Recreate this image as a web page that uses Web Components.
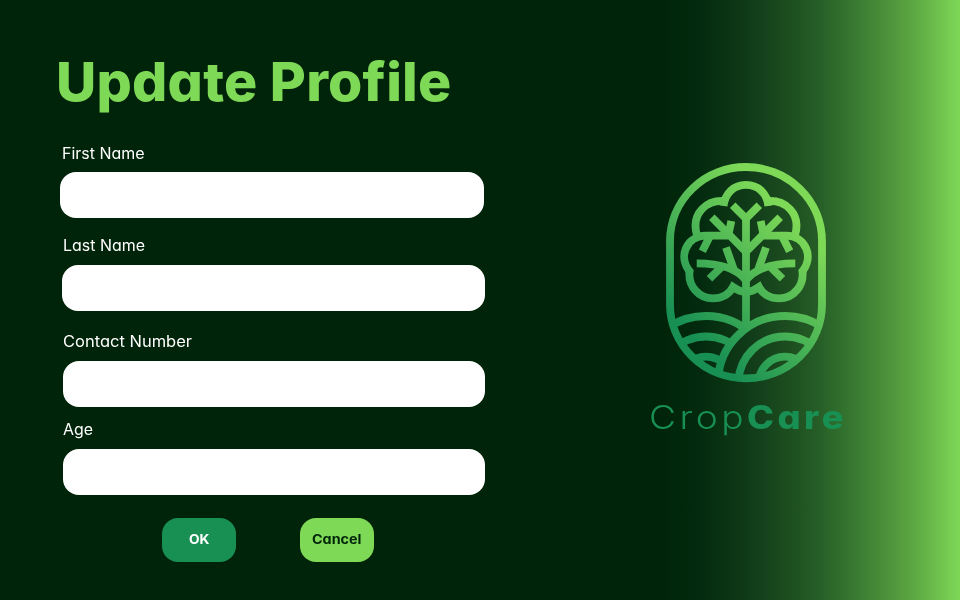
<!DOCTYPE html>
<html lang="en">
<head>
<meta charset="utf-8">
<title>Update Profile</title>
<style>
html, body { margin: 0; height: 100%; overflow: hidden; background: #002409; }
</style>
</head>
<body>
<profile-page></profile-page>
<script>
// Inline text stretched horizontally so that it fills a given width.
class FitText extends HTMLElement {
  constructor() {
    super();
    this.attachShadow({ mode: 'open' }).innerHTML =
      '<style>:host{display:inline-block;white-space:nowrap;text-align:left;font-feature-settings:"cv11","liga" 0}span{display:inline-block;transform-origin:0 50%;letter-spacing:var(--track,0)}</style><span></span>';
  }
  connectedCallback() {
    const s = this.shadowRoot.querySelector('span');
    s.textContent = this.getAttribute('text');
    const target = Number(this.getAttribute('width'));
    const w = s.getBoundingClientRect().width;
    this.style.width = target + 'px';
    s.style.transform = `scaleX(${target / w})`;
  }
}
customElements.define('fit-text', FitText);

class FormField extends HTMLElement {
  constructor() {
    super();
    this.attachShadow({ mode: 'open' }).innerHTML = `
      <style>
        :host { display: block; }
        label { display: block; height: 24px; line-height: 24px; font-size: 15.2px; color: #fff; padding-left: var(--label-indent, 0); margin-bottom: var(--label-gap, 7px); }
        input { display: block; box-sizing: border-box; width: 100%; height: 46px; border: 0; border-radius: 16px; background: #fff; padding: 0 16px; font: inherit; outline: 0; }
      </style>
      <label><slot></slot></label><input type="text">`;
  }
}
customElements.define('form-field', FormField);

class ActionButton extends HTMLElement {
  constructor() {
    super();
    this.attachShadow({ mode: 'open' }).innerHTML = `
      <style>
        :host { display: block; }
        button { display: flex; align-items: center; justify-content: center; width: 74.3px; height: 44px; border: 0; border-radius: 16px; padding: 0 0 2px; background: var(--bg); color: var(--fg); font: 700 13px Inter, sans-serif; }
      </style>
      <button><slot></slot></button>`;
  }
}
customElements.define('action-button', ActionButton);

class CropLogo extends HTMLElement {
  constructor() {
    super();
    this.attachShadow({ mode: 'open' }).innerHTML = `
      <style>
        :host { display: flex; flex-direction: column; align-items: flex-start; width: 200px; }
        svg { display: block; margin-left: 13px; }
        div { display: flex; gap: 0; margin-top: 9px; line-height: 44px; height: 44px; font-size: 32px; color: #189054; --track: 3px; }
        .l { font-weight: 300; } .b { font-weight: 800; }
      </style>
      <svg width="168" height="228" viewBox="662 159 168 228" fill="none">
        <defs>
          <linearGradient id="g" gradientUnits="userSpaceOnUse" x1="706" y1="350" x2="815" y2="241">
            <stop stop-color="#189054"/><stop offset="1" stop-color="#7ed957"/>
          </linearGradient>
          <clipPath id="c"><rect x="668" y="165" width="156" height="215" rx="78" ry="76"/></clipPath>
          <mask id="m" maskUnits="userSpaceOnUse" x="660" y="150" width="180" height="240">
            <rect x="660" y="150" width="180" height="240" fill="#fff"/><circle cx="785" cy="383" r="65" fill="#000"/>
          </mask>
        </defs>
        <g stroke="url(#g)" stroke-width="7.8">
          <rect x="670" y="167" width="152" height="211.4" rx="76" ry="74"/>
          <path d="M746 216V327"/>
          <path d="M732.7 205.2L746 218.5L759.3 205.2"/>
          <path d="M723.6 206C725 193 734 184.9 746 184.9S767 193 768.4 206"/>
          <path d="M726.5 201.2C707 199 690.5 213 697 235.5M765.5 201.2C785 199 801.5 213 795 235.5"/>
          <path d="M728 235.7H706C686 235.7 677 258 691 273M764 235.7H786C806 235.7 815 258 801 273"/>
          <path d="M689.8 269.5C687 286 699 298.4 713 298.4C722 298.4 729.5 294 733 287Q740 292 746 292Q752 292 759 287C762.5 294 770 298.4 779 298.4C793 298.4 805 286 802.2 269.5"/>
          <path d="M711.8 217.3L746 251.8L780.2 217.3"/>
          <path d="M731.3 221L728 237M760.7 221L764 237M702.3 251.3L710 236M789.7 251.3L782 236"/>
          <path d="M696.7 263.4C718 263.4 737 268 746 280.5C755 268 774 263.4 795.3 263.4"/>
          <path d="M726 247.5L734 270M766 247.5L758 270M709.5 278.8L721 267.5M782.5 278.8L771 267.5"/>
          <g clip-path="url(#c)">
            <g mask="url(#m)"><circle cx="706" cy="383" r="67"/><circle cx="706" cy="383" r="46.5"/><circle cx="706" cy="383" r="26.3"/></g>
            <circle cx="785" cy="383" r="67"/><circle cx="785" cy="383" r="46.5"/><circle cx="785" cy="383" r="26.3"/>
          </g>
        </g>
      </svg>
      <div><fit-text class="l" text="Crop" width="98"></fit-text><fit-text class="b" text="Care" width="100"></fit-text></div>`;
  }
}
customElements.define('crop-logo', CropLogo);

class ProfilePage extends HTMLElement {
  constructor() {
    super();
    this.attachShadow({ mode: 'open' }).innerHTML = `
      <style>
        :host { display: grid; grid-template-columns: 649px 1fr; width: 960px; height: 600px; font-family: Inter, sans-serif;
          background: linear-gradient(90deg, #002409 0, #002409 660px, #032a0e 700px, #0f3a18 745px, #1d4e20 790px, #275f27 820px, #377831 853px, #4b9039 885px, #62af46 922px, #7ed957 960px); }
        form { padding: 46px 0 0 56px; display: block; }
        h1 { margin: 0; font-size: 54px; line-height: 72px; height: 72px; font-weight: 800; color: #7ed957; }
        h1 fit-text { --track: .2px; }
        .f1 { width: 424px; margin: 23px 0 0 4px; padding-top: 1px; --label-indent: 1.5px; --label-gap: 6px }
        .f2 { width: 423px; margin: 16px 0 0 6px; --label-gap: 7px; --label-indent: .5px }
        .f3 { width: 422px; margin: 19px 0 0 7px; --label-gap: 7px }
        .f4 { width: 422px; margin: 11px 0 0 7px; --label-gap: 7px }
        .row { display: flex; gap: 63.7px; margin: 23px 0 0 106px; }
        crop-logo { margin-top: 159px; }
      </style>
      <form>
        <h1><fit-text text="Update Profile" width="395.5"></fit-text></h1>
        <form-field class="f1"><fit-text text="First Name" width="82.5"></fit-text></form-field>
        <form-field class="f2"><fit-text text="Last Name" width="82"></fit-text></form-field>
        <form-field class="f3"><fit-text text="Contact Number" width="129"></fit-text></form-field>
        <form-field class="f4"><fit-text text="Age" width="30"></fit-text></form-field>
        <div class="row">
          <action-button style="--bg:#189054;--fg:#fff"><fit-text text="OK" width="20.5"></fit-text></action-button>
          <action-button style="--bg:#7ed957;--fg:#002409"><fit-text text="Cancel" width="49.5"></fit-text></action-button>
        </div>
      </form>
      <crop-logo></crop-logo>`;
  }
}
customElements.define('profile-page', ProfilePage);
</script>
</body>
</html>
